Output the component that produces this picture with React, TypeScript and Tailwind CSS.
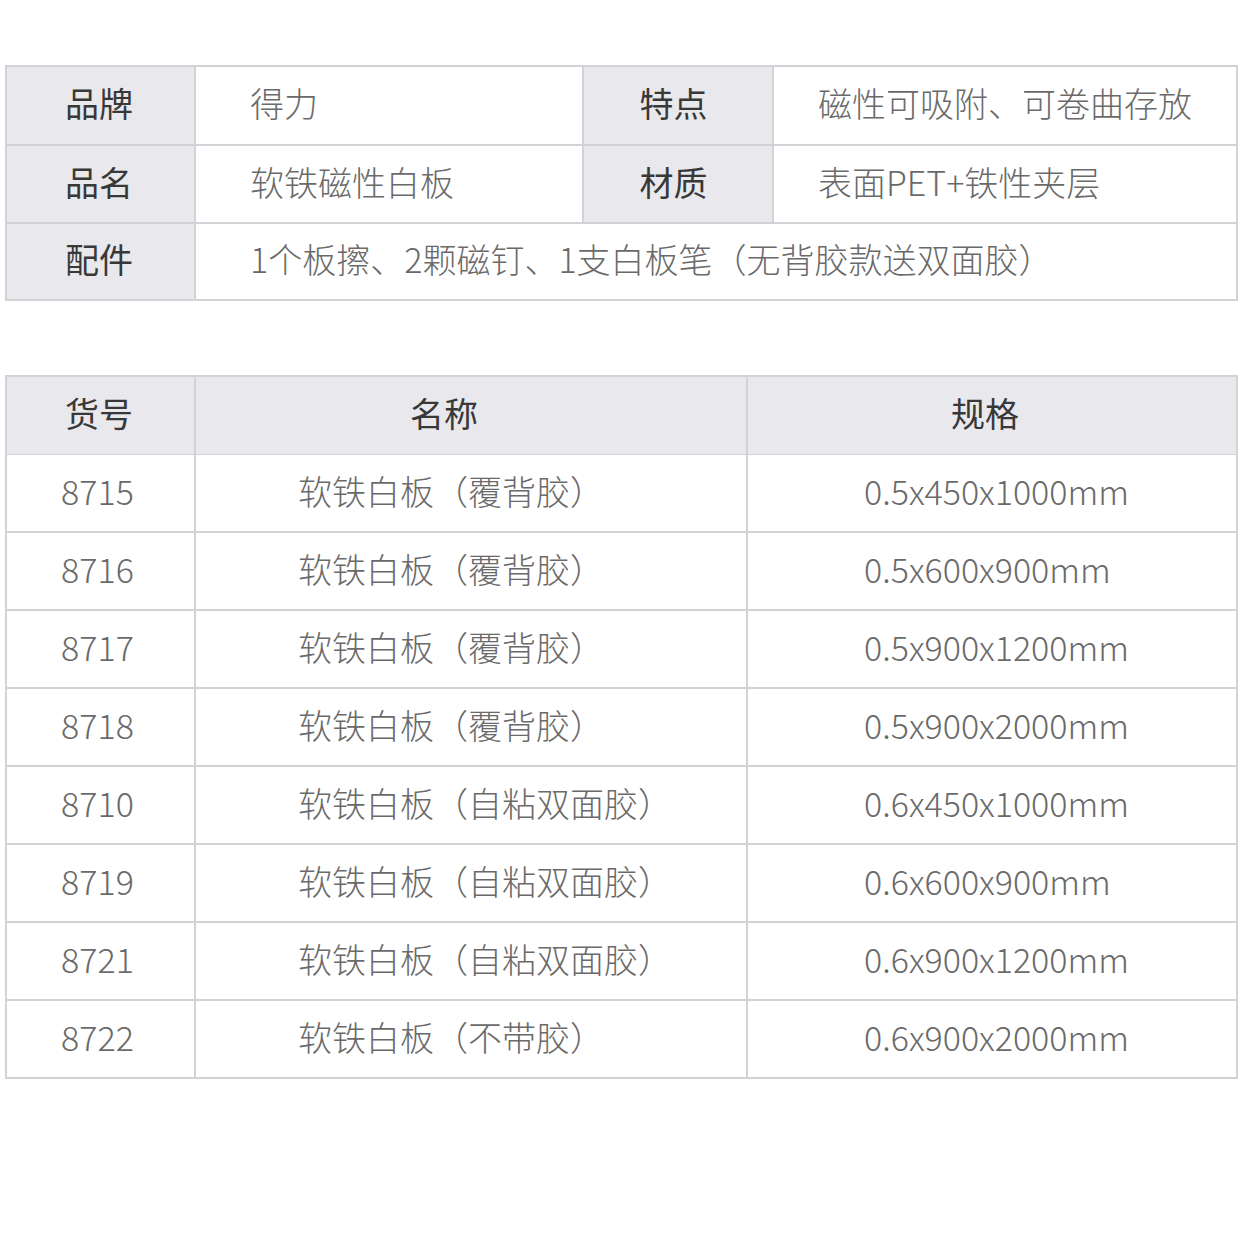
const FONT = { fontFamily: '"Noto Sans CJK SC", "Noto Sans", sans-serif' };

const specRows = [
  { code: '8715', name: '软铁白板（覆背胶）', spec: '0.5x450x1000mm' },
  { code: '8716', name: '软铁白板（覆背胶）', spec: '0.5x600x900mm' },
  { code: '8717', name: '软铁白板（覆背胶）', spec: '0.5x900x1200mm' },
  { code: '8718', name: '软铁白板（覆背胶）', spec: '0.5x900x2000mm' },
  { code: '8710', name: '软铁白板（自粘双面胶）', spec: '0.6x450x1000mm' },
  { code: '8719', name: '软铁白板（自粘双面胶）', spec: '0.6x600x900mm' },
  { code: '8721', name: '软铁白板（自粘双面胶）', spec: '0.6x900x1200mm' },
  { code: '8722', name: '软铁白板（不带胶）', spec: '0.6x900x2000mm' },
];

const head = 'bg-[#e9e8ed] text-[#383838] font-normal border-r-2 border-b-2 border-[#d2d2d7] flex items-center pb-[5px]';
const body = 'bg-white text-[#6a6a6a] font-light border-r-2 border-b-2 border-[#d2d2d7] flex items-center pb-[5px]';

export default function App() {
  return (
    <div className="w-[1242px] h-[1242px] bg-white pt-[65px] pl-[5px] text-[34px] leading-none" style={FONT}>
      {/* Product info */}
      <div className="w-[1233px] grid grid-cols-[189px_388px_190px_464px] grid-rows-[79px_78px_77px] border-l-2 border-t-2 border-[#d2d2d7]">
        <div className={`${head} justify-center pr-[3px]`}>品牌</div>
        <div className={`${body} pl-[54px]`}>得力</div>
        <div className={`${head} justify-center pr-[9px]`}>特点</div>
        <div className={`${body} pl-[44px]`}>磁性可吸附、可卷曲存放</div>

        <div className={`${head} justify-center pr-[3px]`}>品名</div>
        <div className={`${body} pl-[54px]`}>软铁磁性白板</div>
        <div className={`${head} justify-center pr-[9px]`}>材质</div>
        <div className={`${body} pl-[44px]`}>表面PET+铁性夹层</div>

        <div className={`${head} justify-center pr-[3px]`}>配件</div>
        <div className={`${body} col-span-3 pl-[54px]`}>1个板擦、2颗磁钉、1支白板笔（无背胶款送双面胶）</div>
      </div>

      {/* Model list */}
      <div className="mt-[74px] w-[1233px] grid grid-cols-[189px_552px_490px] auto-rows-[78px] border-l-2 border-t-2 border-[#d2d2d7]">
        <div className={`${head} justify-center pr-[3px] h-[79px]`}>货号</div>
        <div className={`${head} pl-[214px] h-[79px]`}>名称</div>
        <div className={`${head} pl-[203px] h-[79px]`}>规格</div>
        {specRows.map((r) => (
          <div key={r.code} className="contents">
            <div className={`${body} justify-center pr-[6px]`}>{r.code}</div>
            <div className={`${body} pl-[102px]`}>{r.name}</div>
            <div className={`${body} pl-[116px]`}>{r.spec}</div>
          </div>
        ))}
      </div>
    </div>
  );
}
